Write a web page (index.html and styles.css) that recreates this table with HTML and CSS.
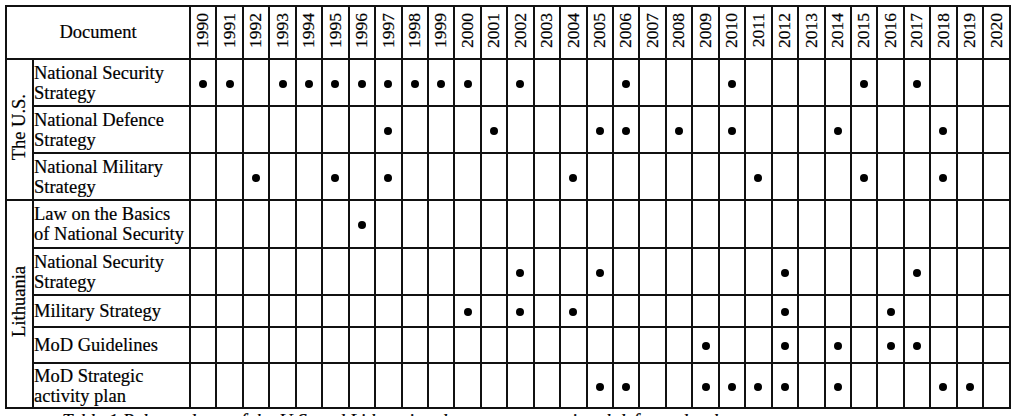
FILE: index.html
```html
<!DOCTYPE html>
<html>
<head>
<meta charset="utf-8">
<link rel="stylesheet" href="styles.css">
</head>
<body>
<table class="grid" id="grid">
  <colgroup>
    <col class="c-country">
    <col class="c-doc">
  </colgroup>
  <thead>
    <tr class="h-head" id="headrow">
      <th colspan="2" class="doc-head">Document</th>
    </tr>
  </thead>
  <tbody id="body"></tbody>
</table>
<div class="caption">Table 1 Release dates of the U.S. and Lithuanian documents on national defence development</div>
<script src="app.js"></script>
</body>
</html>
```
FILE: app.js
```js
(function () {
  var years = [];
  for (var y = 1990; y <= 2020; y++) years.push(y);
  var head = document.getElementById('headrow');
  var cg = document.querySelector('colgroup');
  years.forEach(function (y) {
    var c = document.createElement('col');
    c.className = 'c-year';
    cg.appendChild(c);
    var th = document.createElement('th');
    th.className = 'year';
    th.innerHTML = '<span class="vtext">' + y + '</span>';
    head.appendChild(th);
  });
  var rows = [
    { c: 'The U.S.', span: 3, name: 'National Security<br>Strategy', h: 'r47', d: [1990,1991,1993,1994,1995,1996,1997,1998,1999,2000,2002,2006,2010,2015,2017] },
    { name: 'National Defence<br>Strategy', h: 'r47', d: [1997,2001,2005,2006,2008,2010,2014,2018] },
    { name: 'National Military<br>Strategy', h: 'r47', d: [1992,1995,1997,2004,2011,2015,2018] },
    { c: 'Lithuania', span: 5, name: 'Law on the Basics<br>of National Security', h: 'r48', d: [1996] },
    { name: 'National Security<br>Strategy', h: 'r47', d: [2002,2005,2012,2017] },
    { name: 'Military Strategy', h: 'r32', d: [2000,2002,2004,2012,2016] },
    { name: 'MoD Guidelines', h: 'r36', d: [2009,2012,2014,2016,2017] },
    { name: 'MoD Strategic<br>activity plan', h: 'r45', d: [2005,2006,2009,2010,2011,2012,2014,2018,2019] }
  ];
  var body = document.getElementById('body');
  rows.forEach(function (r) {
    var tr = document.createElement('tr');
    tr.className = r.h;
    var html = '';
    if (r.c) html += '<td class="country" rowspan="' + r.span + '"><span class="vtext">' + r.c + '</span></td>';
    html += '<td class="doc">' + r.name + '</td>';
    years.forEach(function (y) {
      html += '<td class="cell">' + (r.d.indexOf(y) >= 0 ? '<span class="dot"></span>' : '') + '</td>';
    });
    tr.innerHTML = html;
    body.appendChild(tr);
  });
})();
```
FILE: styles.css
```css
html, body {
  margin: 0;
  padding: 0;
  background: #ffffff;
  overflow: hidden;
}
body {
  font-family: "Liberation Serif", "Times New Roman", serif;
  color: #000;
  padding: 5px 0 0 5px;
  -webkit-text-stroke: 0.2px #000;
}
.grid {
  border-collapse: collapse;
  table-layout: fixed;
  width: 1006px;
}
.grid th, .grid td {
  border: 2px solid #111;
  padding: 0;
}
.c-country { width: 27px; }
.c-doc { width: 157px; }
.h-head { height: 53px; }
.r47 { height: 47px; }
.r48 { height: 48px; }
.r32 { height: 32px; }
.r36 { height: 36px; }
.r45 { height: 45px; }
.doc-head {
  font-weight: normal;
  font-size: 18.5px;
  text-align: center;
  vertical-align: middle;
  padding-top: 4px;
}
.year {
  font-weight: normal;
  font-size: 17.5px;
  text-align: center;
  vertical-align: middle;
}
.vtext {
  display: inline-block;
  writing-mode: vertical-rl;
  transform: rotate(180deg);
  line-height: 1;
}
.country {
  font-size: 18.5px;
  text-align: center;
  vertical-align: middle;
}
.doc {
  font-size: 18.5px;
  line-height: 20px;
  padding-left: 1px;
  padding-top: 3px;
  vertical-align: middle;
  white-space: nowrap;
  overflow: hidden;
}
.cell {
  text-align: center;
  vertical-align: middle;
}
.dot {
  display: block;
  width: 8px;
  height: 8px;
  border-radius: 50%;
  background: #000;
  margin: 2px auto 0;
}
.caption {
  font-style: italic;
  font-size: 19px;
  margin: 1px 0 0 57px;
  white-space: nowrap;
}
```
